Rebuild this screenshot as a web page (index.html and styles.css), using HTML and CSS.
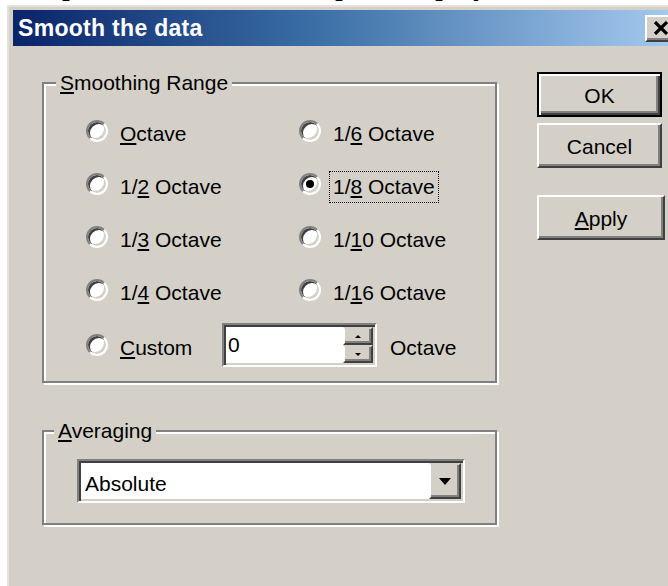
FILE: index.html
```html
<!DOCTYPE html>
<html lang="en">
<head>
<meta charset="utf-8">
<title>Smooth the data</title>
<link rel="stylesheet" href="styles.css">
</head>
<body>
  <div class="doc">
    <div class="doc-line"><span class="gap g1"></span>p<span class="gap g2"></span>p<span class="gap g3"></span>p<span class="gap g4"></span>y</div>
  </div>

  <div class="window">
    <div class="titlebar">
      <span class="title">Smooth the data</span>
      <button class="close" type="button" aria-label="Close">
        <svg width="16" height="14" viewBox="0 0 16 14">
          <path d="M2 1 L14 13 M14 1 L2 13" stroke="#000" stroke-width="3.2" fill="none"/>
        </svg>
      </button>
    </div>

    <div class="client">
      <div class="groups">
        <fieldset class="group range">
          <legend class="group-title"><u>S</u>moothing Range</legend>
          <div class="options">
            <label class="option"><span class="radio"></span><span class="text"><u>O</u>ctave</span></label>
            <label class="option"><span class="radio"></span><span class="text">1/<u>6</u> Octave</span></label>
            <label class="option"><span class="radio"></span><span class="text">1/<u>2</u> Octave</span></label>
            <label class="option"><span class="radio checked"></span><span class="text focus">1/<u>8</u> Octave</span></label>
            <label class="option"><span class="radio"></span><span class="text">1/<u>3</u> Octave</span></label>
            <label class="option"><span class="radio"></span><span class="text">1/<u>1</u>0 Octave</span></label>
            <label class="option"><span class="radio"></span><span class="text">1/<u>4</u> Octave</span></label>
            <label class="option"><span class="radio"></span><span class="text">1/<u>1</u>6 Octave</span></label>
            <div class="option custom">
              <span class="radio"></span>
              <span class="text custom-label"><u>C</u>ustom</span>
              <div class="spin-edit">
                <span class="edit-value">0</span>
                <div class="spin">
                  <span class="spin-btn"><span class="tri up"></span></span>
                  <span class="spin-btn"><span class="tri down"></span></span>
                </div>
              </div>
              <span class="text">Octave</span>
            </div>
          </div>
        </fieldset>

        <fieldset class="group averaging">
          <legend class="group-title"><u>A</u>veraging</legend>
          <div class="combo">
            <span class="combo-value">Absolute</span>
            <span class="combo-btn"><span class="tri drop"></span></span>
          </div>
        </fieldset>
      </div>

      <div class="actions">
        <button class="btn default" type="button">OK</button>
        <button class="btn" type="button">Cancel</button>
        <button class="btn apply" type="button"><u>A</u>pply</button>
      </div>
    </div>
  </div>
</body>
</html>
```

FILE: styles.css
```css
html, body {
  margin: 0;
  padding: 0;
}

body {
  width: 668px;
  height: 586px;
  overflow: hidden;
  background: #fff;
  font-family: "Liberation Sans", Arial, sans-serif;
  font-size: 21px;
  color: #000;
}

/* strip of the document behind the dialog: only descenders peek out */
.doc {
  height: 5px;
  overflow: hidden;
  background: #fff;
}

.doc-line {
  margin-top: -33px;
  font: 32px/32px "Liberation Serif", "Times New Roman", serif;
  white-space: nowrap;
}

.gap { display: inline-block; }
.g1 { width: 62px; }
.g2 { width: 257px; }
.g3 { width: 84px; }
.g4 { width: 22px; }

/* dialog frame */
.window {
  width: 669px;
  height: 620px;
  margin-left: 7px;
  box-sizing: border-box;
  background: #d4d0c8;
  border-top: 2px solid #e4e2dc;
  border-left: 2px solid #e4e2dc;
  padding: 3px 0 0 4px;
}

.titlebar {
  height: 36px;
  display: flex;
  align-items: center;
  justify-content: space-between;
  background: linear-gradient(to right, #0a246a 0%, #3a6ea5 45%, #a6caf0 100%);
  padding-left: 5px;
}

.title {
  color: #fff;
  font-weight: bold;
  font-size: 23px;
  letter-spacing: 0.3px;
}

.close {
  width: 31px;
  height: 27px;
  margin: 0;
  padding: 0;
  display: flex;
  align-items: center;
  justify-content: center;
  background: #d4d0c8;
  border: 2px solid;
  border-color: #fff #404040 #404040 #fff;
  box-shadow: inset -2px -2px 0 #808080;
}

/* dialog body */
.client {
  display: flex;
  align-items: flex-start;
  padding-left: 29px;
}

.groups {
  width: 455px;
  padding-top: 24px;
  display: flex;
  flex-direction: column;
  gap: 35px;
}

/* etched group boxes */
.group {
  margin: 0;
  padding: 0;
  min-width: 0;
  border: 2px solid #808080;
  box-shadow: 2px 2px 0 #fff, inset 2px 2px 0 #fff;
}

.group-title {
  margin-left: 12px;
  padding: 0 4px;
  line-height: 26px;
  background: #d4d0c8;
}

.options {
  display: grid;
  grid-template-columns: 213px auto;
  grid-auto-rows: 53px;
  padding: 8px 0 12px 42px;
}

.option {
  display: flex;
  align-items: center;
  gap: 12px;
}

.text {
  margin-top: 6px;
  line-height: 24px;
  white-space: nowrap;
}

.focus {
  outline: 1px dotted #000;
  outline-offset: 3px;
}

/* round option buttons */
.radio {
  flex: none;
  width: 22px;
  height: 22px;
  box-sizing: border-box;
  border-radius: 50%;
  border: 2px solid;
  border-color: #808080 #fff #fff #808080;
  box-shadow: inset 2px 2px 0 #404040, inset -2px -2px 0 #d4d0c8;
  background: #fff;
  display: flex;
  align-items: center;
  justify-content: center;
}

.radio.checked::after {
  content: "";
  width: 8px;
  height: 8px;
  border-radius: 50%;
  background: #000;
}

.custom {
  grid-column: 1 / -1;
  margin-top: 5px;
}

.custom-label {
  width: 90px;
}

/* numeric field with up/down arrows */
.spin-edit {
  width: 155px;
  height: 44px;
  box-sizing: border-box;
  display: flex;
  align-items: stretch;
  background: #fff;
  border: 2px solid;
  border-color: #808080 #fff #fff #808080;
  box-shadow: inset 2px 2px 0 #404040, inset -2px -2px 0 #d4d0c8;
  padding: 2px 2px 2px 4px;
  margin-right: 1px;
}

.edit-value {
  flex: 1;
  line-height: 36px;
}

.spin {
  width: 30px;
  display: flex;
  flex-direction: column;
}

.spin-btn {
  flex: 1;
  box-sizing: border-box;
  background: #d4d0c8;
  border: 2px solid;
  border-color: #d4d0c8 #404040 #404040 #fff;
  box-shadow: inset -2px -2px 0 #808080;
  display: flex;
  align-items: center;
  justify-content: center;
}

.tri {
  width: 0;
  height: 0;
  border-left: 3px solid transparent;
  border-right: 3px solid transparent;
}

.tri.up { border-bottom: 3px solid #000; }
.tri.down { border-top: 3px solid #000; }

.tri.drop {
  border-left-width: 6px;
  border-right-width: 6px;
  border-top: 7px solid #000;
}

/* drop-down list */
.averaging {
  padding: 15px 0 20px 0;
}

.averaging .group-title {
  margin-left: 10px;
}

.combo {
  width: 388px;
  height: 44px;
  margin-left: 33px;
  box-sizing: border-box;
  display: flex;
  background: #fff;
  border: 2px solid;
  border-color: #808080 #fff #fff #808080;
  box-shadow: inset 2px 2px 0 #404040, inset -2px -2px 0 #d4d0c8;
  padding: 2px 2px 2px 6px;
}

.combo-value {
  flex: 1;
  line-height: 38px;
  padding-top: 2px;
}

.combo-btn {
  width: 32px;
  box-sizing: border-box;
  background: #d4d0c8;
  border: 2px solid;
  border-color: #d4d0c8 #404040 #404040 #fff;
  box-shadow: inset -2px -2px 0 #808080;
  display: flex;
  align-items: center;
  justify-content: center;
}

/* command buttons */
.actions {
  margin-left: 40px;
  padding-top: 26px;
  display: flex;
  flex-direction: column;
  gap: 6px;
}

.btn {
  width: 125px;
  height: 45px;
  margin: 0;
  padding: 2px 0 0;
  font: inherit;
  color: #000;
  background: #d4d0c8;
  border: 2px solid;
  border-color: #fff #404040 #404040 #fff;
  box-shadow: inset -2px -2px 0 #808080;
}

.btn.default {
  border: 2px solid #000;
  box-shadow: inset 2px 2px 0 #fff, inset -2px -2px 0 #404040, inset -4px -4px 0 #808080;
}

.btn.apply {
  width: 128px;
  margin-top: 21px;
}
```
